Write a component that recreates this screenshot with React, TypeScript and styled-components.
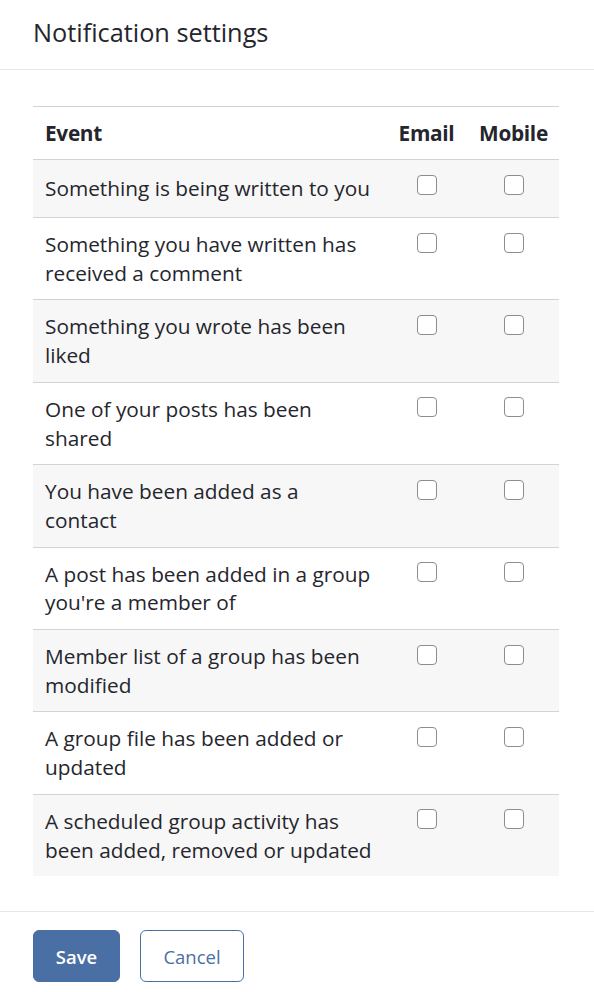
import React from "react";
import styled, { createGlobalStyle } from "styled-components";

const GlobalStyle = createGlobalStyle`
  * { box-sizing: border-box; }
  html, body { margin: 0; padding: 0; background: #ffffff; }
  body {
    font-family: "Open Sans", "Noto Sans", "Liberation Sans", sans-serif;
    color: #25262d;
  }
`;

const Page = styled.div`
  width: 594px;
  min-height: 992px;
  display: flex;
  flex-direction: column;
  background: #ffffff;
`;

const Header = styled.header`
  padding: 16px 33px 21px;
  border-bottom: 1px solid #e6e6e6;
`;

const Title = styled.h1`
  margin: 0;
  font-size: 25.3px;
  line-height: 32px;
  font-weight: 400;
  color: #25262d;
`;

const Body = styled.main`
  padding: 36px 35px 35px 33px;
`;

const Table = styled.div`
  width: 526px;
  border-top: 1px solid #d3d3d3;
`;

const Row = styled.div<{ $shaded?: boolean; $last?: boolean }>`
  display: grid;
  grid-template-columns: 352px 83px 91px;
  min-height: 58px;
  background: ${(p) => (p.$shaded ? "#f7f7f7" : "#ffffff")};
  border-bottom: ${(p) => (p.$last ? "none" : "1px solid #d3d3d3")};
`;

const HeadRow = styled(Row)`
  min-height: 53px;
`;

const TextCell = styled.div`
  padding: 12px;
  font-size: 20.8px;
  line-height: 28.7px;
  align-self: center;
`;

const HeadCell = styled.div<{ $center?: boolean }>`
  padding: 11px 0 11px ${(p) => (p.$center ? "0" : "12px")};
  font-size: 20.8px;
  line-height: 28.7px;
  font-weight: 700;
  letter-spacing: -0.3px;
  text-align: ${(p) => (p.$center ? "center" : "left")};
  align-self: center;
`;

const Line = styled.span`
  display: block;
  white-space: nowrap;
`;

const CheckCell = styled.div`
  display: flex;
  justify-content: center;
  padding-top: 14.5px;
`;

const Checkbox = styled.input.attrs({ type: "checkbox" })`
  appearance: none;
  -webkit-appearance: none;
  margin: 0;
  width: 20px;
  height: 20px;
  border: 1.3px solid #8d8d8d;
  border-radius: 4px;
  background: #ffffff;
  cursor: pointer;

  &:checked {
    background: #4a6fa5;
    border-color: #4a6fa5;
  }
`;

const Footer = styled.footer`
  border-top: 1px solid #e6e6e6;
  padding: 18px 33px 10px;
  display: flex;
  gap: 20px;
`;

const Button = styled.button<{ $primary?: boolean }>`
  height: 52px;
  padding: 0;
  border-radius: 6px;
  border: 1px solid #4a6fa5;
  background: ${(p) => (p.$primary ? "#4a6fa5" : "#ffffff")};
  color: ${(p) => (p.$primary ? "#ffffff" : "#4a6fa5")};
  font-family: "Open Sans", "Noto Sans", sans-serif;
  font-size: 18.5px;
  font-weight: ${(p) => (p.$primary ? 600 : 400)};
  cursor: pointer;
`;

const SaveButton = styled(Button)`
  width: 87px;
`;

const CancelButton = styled(Button)`
  width: 104px;
`;

const events: string[][] = [
  ["Something is being written to you"],
  ["Something you have written has", "received a comment"],
  ["Something you wrote has been", "liked"],
  ["One of your posts has been", "shared"],
  ["You have been added as a", "contact"],
  ["A post has been added in a group", "you're a member of"],
  ["Member list of a group has been", "modified"],
  ["A group file has been added or", "updated"],
  ["A scheduled group activity has", "been added, removed or updated"],
];

export default function App() {
  return (
    <>
      <GlobalStyle />
      <Page>
        <Header>
          <Title>Notification settings</Title>
        </Header>
        <Body>
          <Table>
            <HeadRow>
              <HeadCell>Event</HeadCell>
              <HeadCell $center>Email</HeadCell>
              <HeadCell $center>Mobile</HeadCell>
            </HeadRow>
            {events.map((lines, i) => (
              <Row key={i} $shaded={i % 2 === 0} $last={i === events.length - 1}>
                <TextCell>
                  {lines.map((l) => (
                    <Line key={l}>{l}</Line>
                  ))}
                </TextCell>
                <CheckCell>
                  <Checkbox aria-label={`Email: ${lines.join(" ")}`} />
                </CheckCell>
                <CheckCell>
                  <Checkbox aria-label={`Mobile: ${lines.join(" ")}`} />
                </CheckCell>
              </Row>
            ))}
          </Table>
        </Body>
        <Footer>
          <SaveButton $primary>Save</SaveButton>
          <CancelButton>Cancel</CancelButton>
        </Footer>
      </Page>
    </>
  );
}
